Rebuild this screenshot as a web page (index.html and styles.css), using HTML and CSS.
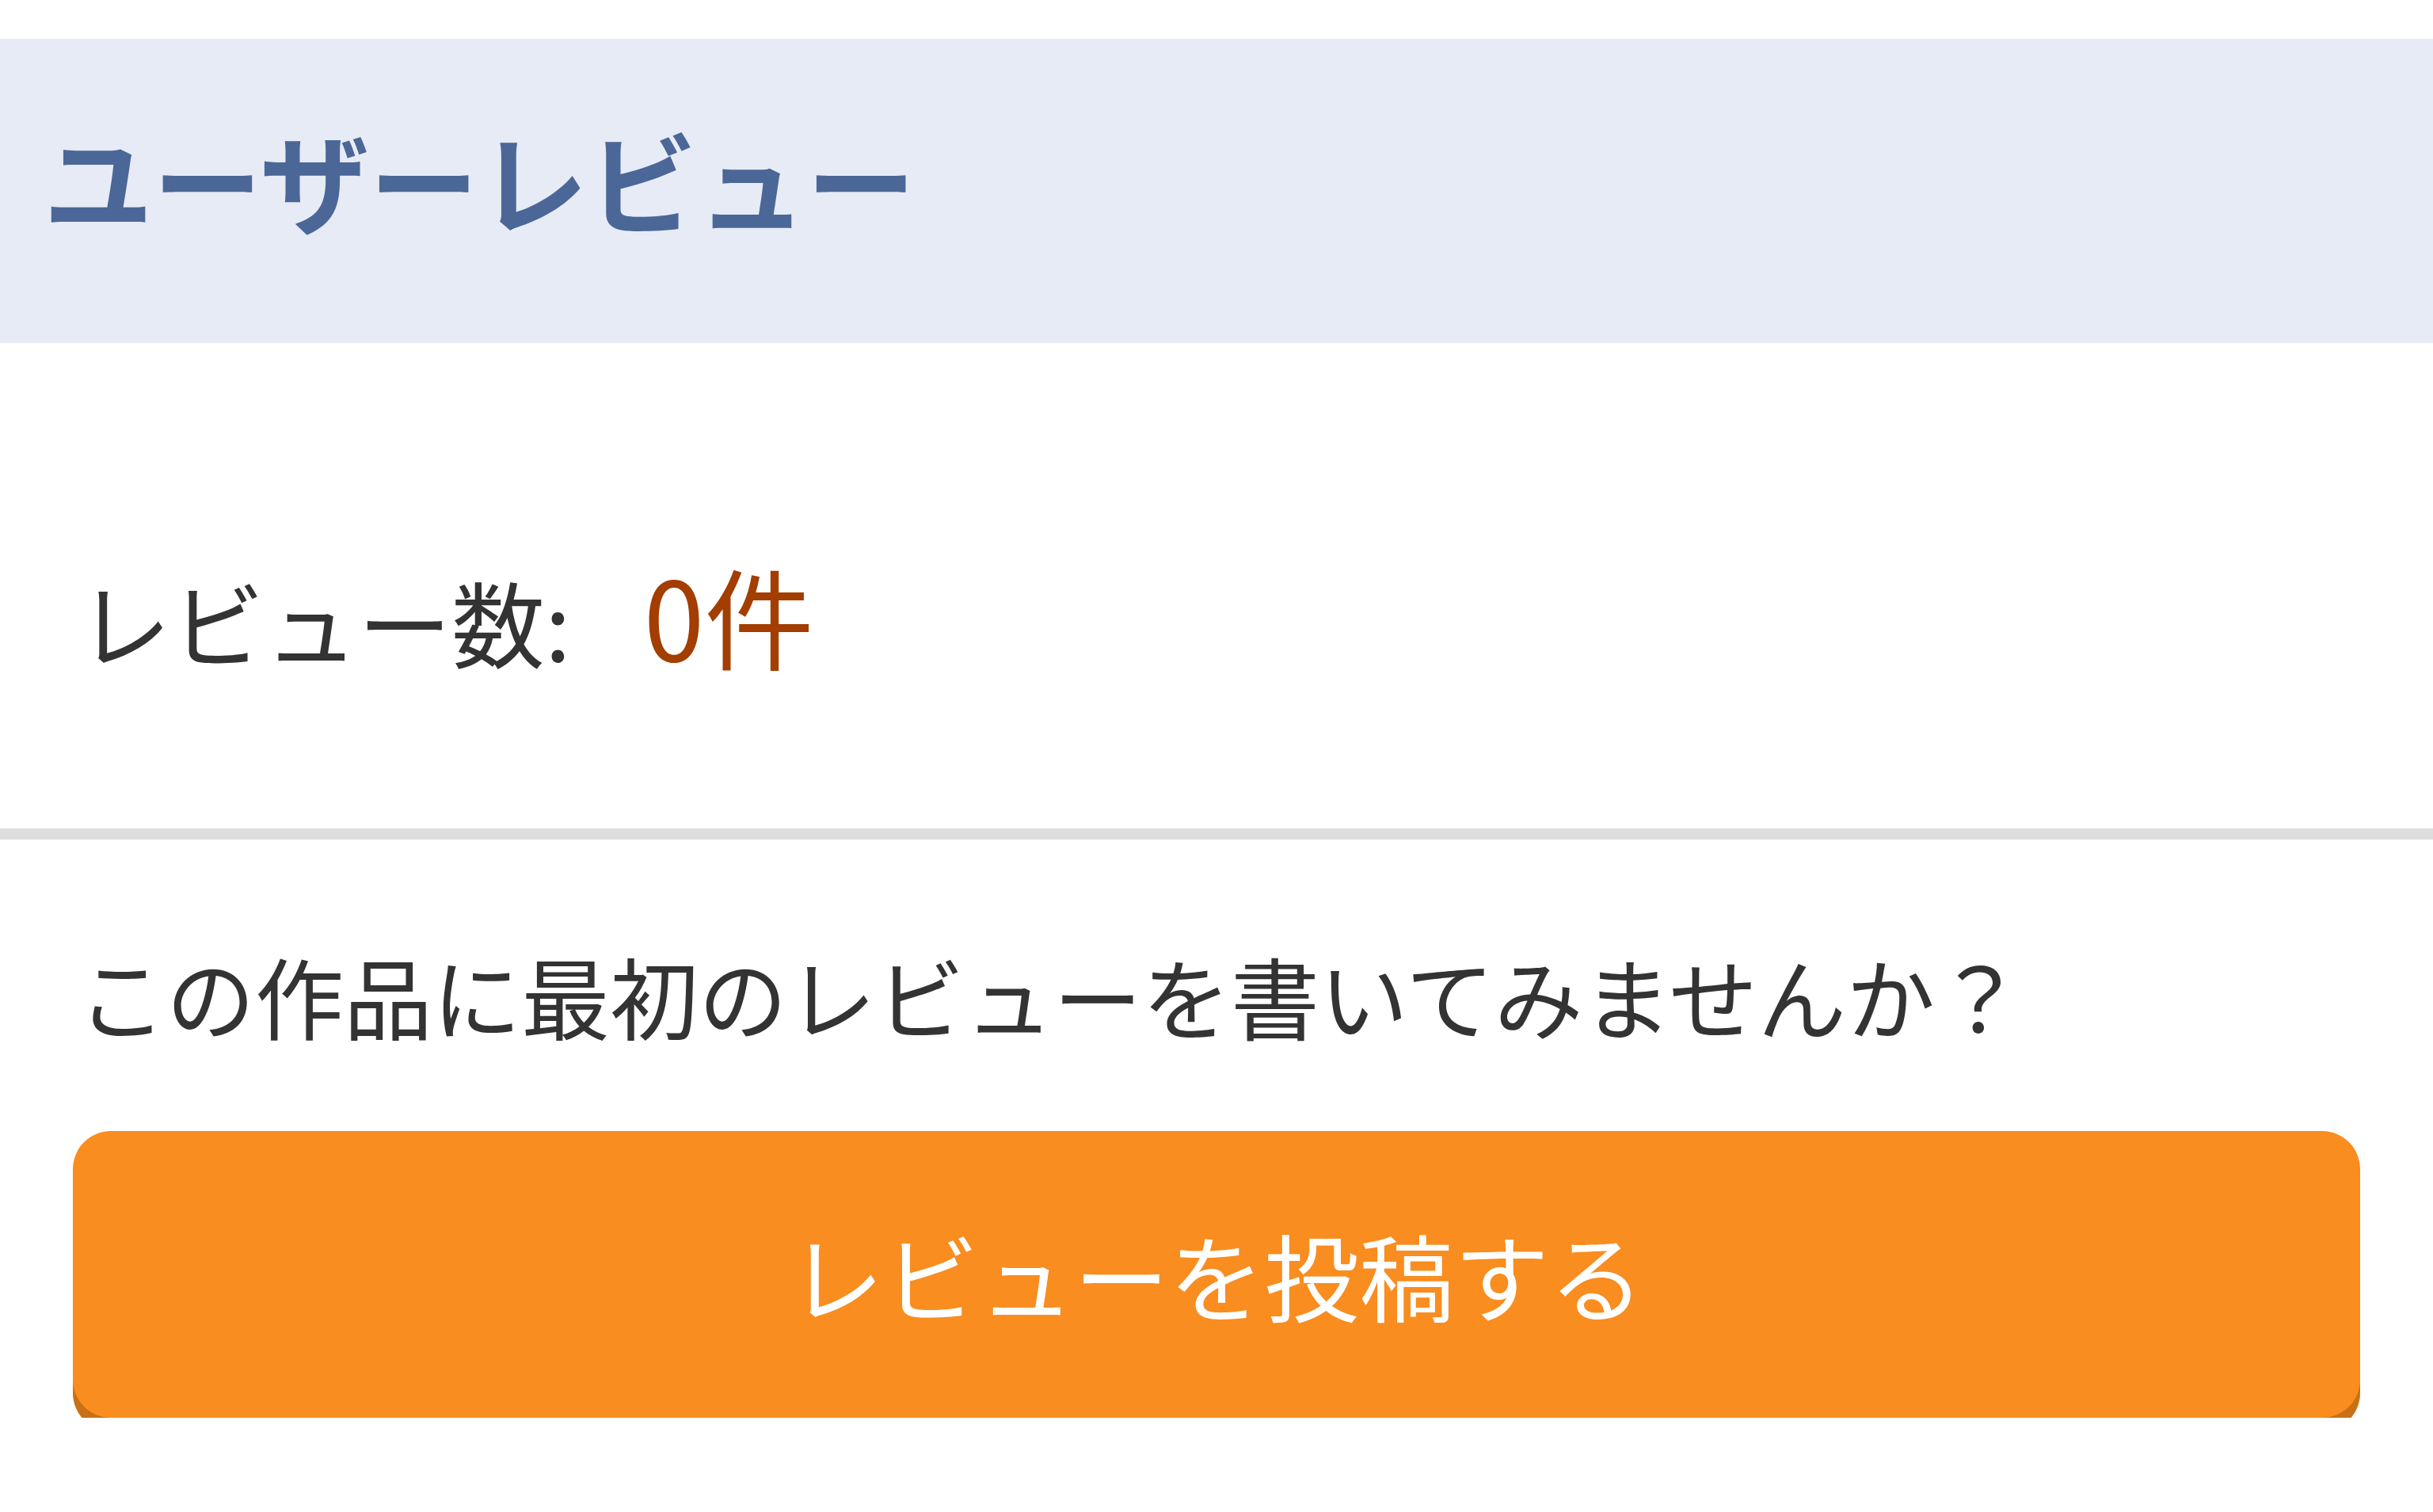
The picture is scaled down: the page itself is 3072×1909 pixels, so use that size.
FILE: index.html
```html
<!DOCTYPE html>
<html lang="ja">
<head>
<meta charset="utf-8">
<title>ユーザーレビュー</title>
<link rel="stylesheet" href="styles.css">
</head>
<body>
<section class="reviews">
  <div class="reviews-header">
    <h2 class="reviews-title">ユーザーレビュー</h2>
  </div>
  <div class="reviews-count">
    <p class="count-line"><span class="count-label">レビュー数:</span><span class="count-value">0件</span></p>
  </div>
  <div class="reviews-write">
    <p class="write-prompt">この作品に最初のレビューを書いてみませんか？</p>
    <button class="write-button" type="button">レビューを投稿する</button>
  </div>
</section>
</body>
</html>
```

FILE: styles.css
```css
html, body {
  margin: 0;
  padding: 0;
  background: #ffffff;
}

body {
  padding-top: 49px;
  font-family: "Noto Sans CJK JP", "Noto Sans", sans-serif;
}

.reviews-header {
  height: 384px;
  box-sizing: border-box;
  background: #e7ebf5;
  display: flex;
  align-items: center;
  padding-left: 55px;
  padding-bottom: 32px;
}

.reviews-title {
  margin: 0;
  font-size: 138px;
  font-weight: 700;
  line-height: 1;
  color: #4b6797;
}

.reviews-count {
  height: 627px;
  box-sizing: border-box;
  padding-top: 70px;
  padding-left: 98px;
  display: flex;
  align-items: center;
  border-bottom: 14px solid #dedede;
}

.count-line {
  margin: 0;
  line-height: 1;
}

.count-label {
  font-size: 118px;
  color: #333333;
}

.count-value {
  font-size: 138px;
  color: #a33d00;
  margin-left: 92px;
}

.reviews-write {
  padding: 118px 92px 0;
}

.write-prompt {
  margin: 0;
  padding-left: 6px;
  font-size: 112px;
  line-height: 157px;
  color: #333333;
}

.write-button {
  display: flex;
  align-items: center;
  justify-content: center;
  width: 100%;
  height: 362px;
  margin-top: 93px;
  border: none;
  border-radius: 48px;
  background: #f98d1f;
  box-shadow: 0 17px 0 #c97016;
  color: #ffffff;
  font-family: inherit;
  font-size: 120px;
  padding: 0;
}
```
